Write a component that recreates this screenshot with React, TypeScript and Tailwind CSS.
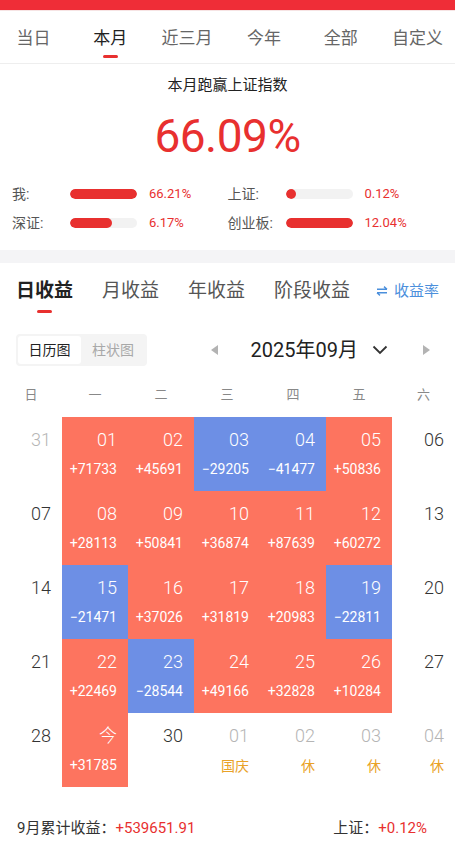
import React from 'react';

const RED = '#e8302f';
const CELL_RED = 'bg-[#fd745f]';
const CELL_BLUE = 'bg-[#6d8fe5]';

type Cell = {
  day: string;
  value?: string;
  kind: 'up' | 'down' | 'off' | 'prev' | 'next';
  note?: string;
};

const weeks: Cell[][] = [
  [
    { day: '31', kind: 'prev' },
    { day: '01', value: '+71733', kind: 'up' },
    { day: '02', value: '+45691', kind: 'up' },
    { day: '03', value: '−29205', kind: 'down' },
    { day: '04', value: '−41477', kind: 'down' },
    { day: '05', value: '+50836', kind: 'up' },
    { day: '06', kind: 'off' },
  ],
  [
    { day: '07', kind: 'off' },
    { day: '08', value: '+28113', kind: 'up' },
    { day: '09', value: '+50841', kind: 'up' },
    { day: '10', value: '+36874', kind: 'up' },
    { day: '11', value: '+87639', kind: 'up' },
    { day: '12', value: '+60272', kind: 'up' },
    { day: '13', kind: 'off' },
  ],
  [
    { day: '14', kind: 'off' },
    { day: '15', value: '−21471', kind: 'down' },
    { day: '16', value: '+37026', kind: 'up' },
    { day: '17', value: '+31819', kind: 'up' },
    { day: '18', value: '+20983', kind: 'up' },
    { day: '19', value: '−22811', kind: 'down' },
    { day: '20', kind: 'off' },
  ],
  [
    { day: '21', kind: 'off' },
    { day: '22', value: '+22469', kind: 'up' },
    { day: '23', value: '−28544', kind: 'down' },
    { day: '24', value: '+49166', kind: 'up' },
    { day: '25', value: '+32828', kind: 'up' },
    { day: '26', value: '+10284', kind: 'up' },
    { day: '27', kind: 'off' },
  ],
  [
    { day: '28', kind: 'off' },
    { day: '今', value: '+31785', kind: 'up' },
    { day: '30', kind: 'off' },
    { day: '01', kind: 'next', note: '国庆' },
    { day: '02', kind: 'next', note: '休' },
    { day: '03', kind: 'next', note: '休' },
    { day: '04', kind: 'next', note: '休' },
  ],
];

const compare = [
  { label: '我:', pct: 100, value: '66.21%' },
  { label: '上证:', pct: 16, value: '0.12%' },
  { label: '深证:', pct: 62, value: '6.17%' },
  { label: '创业板:', pct: 100, value: '12.04%' },
];

const gridCols = 'grid grid-cols-[62px_repeat(5,66px)_1fr]';

function DayCell({ cell }: { cell: Cell }) {
  const bg = cell.kind === 'up' ? CELL_RED : cell.kind === 'down' ? CELL_BLUE : 'bg-white';
  const dayColor =
    cell.kind === 'up' || cell.kind === 'down'
      ? 'text-white'
      : cell.kind === 'off'
        ? 'text-[#333333]'
        : 'text-[#b5b5b5]';
  return (
    <div className={`${bg} h-[74px] flex flex-col items-end pr-[11px] pt-[11px]`}>
      <span className={`${dayColor} text-[18px] leading-[24px] font-light`}>{cell.day}</span>
      {cell.value && (
        <span className="text-white text-[14px] leading-[18px] mt-[8px]">{cell.value}</span>
      )}
      {cell.note && (
        <span className="text-[#e9a227] text-[14px] leading-[18px] mt-[9px]">{cell.note}</span>
      )}
    </div>
  );
}

export default function App() {
  return (
    <div className="w-[455px] h-[847px] bg-white overflow-hidden font-['Roboto','Noto_Sans_CJK_SC',sans-serif] text-[#222]">
      {/* top red strip */}
      <div className="h-[10px] bg-[#ef2d37]" />
      <div className="h-px bg-[#f6e4e4]" />

      {/* period tabs */}
      <div className="h-[53px] border-b border-[#eeeeee] overflow-hidden">
        <div className="grid grid-cols-6 w-[461px] -ml-[5px] h-full">
          {['当日', '本月', '近三月', '今年', '全部', '自定义'].map((t) => (
            <div key={t} className="flex flex-col items-center pt-[16px]">
              <span className={`text-[17px] leading-[22px] ${t === '本月' ? 'text-[#222]' : 'text-[#666]'}`}>{t}</span>
              {t === '本月' && <span className="mt-[6px] w-[15px] h-[3px] rounded-full bg-[#e8302f]" />}
            </div>
          ))}
        </div>
      </div>

      {/* summary */}
      <div className="h-[186px] flex flex-col items-center">
        <div className="mt-[11px] text-[15px] leading-[20px] text-[#222]">本月跑赢上证指数</div>
        <div className="mt-[13px] text-[46px] leading-[56px] tracking-[-0.5px]" style={{ color: RED }}>66.09%</div>
        <div className="w-full grid grid-cols-2 px-[12px] mt-[21px] gap-y-[11px]">
          {compare.map((c) => (
            <div key={c.label} className="flex items-center h-[18px]">
              <span className="w-[58px] text-[14px] text-[#555]">{c.label}</span>
              <div className="w-[67px] h-[10px] rounded-full bg-[#f2f2f2] overflow-hidden">
                <div className="h-full rounded-full bg-[#e8302f]" style={{ width: `${c.pct}%` }} />
              </div>
              <span className="ml-[12px] text-[13px]" style={{ color: RED }}>{c.value}</span>
            </div>
          ))}
        </div>
      </div>

      <div className="h-[13px] bg-[#f4f4f6]" />

      {/* profit tabs */}
      <div className="h-[64px] flex items-start pl-[16px] pr-[16px] pt-[16px]">
        <div className="flex gap-[29px]">
          {['日收益', '月收益', '年收益', '阶段收益'].map((t, i) => (
            <div key={t} className="flex flex-col items-center">
              <span className={`text-[19px] leading-[24px] ${i === 0 ? 'font-bold text-[#222]' : 'text-[#555]'}`}>{t}</span>
              {i === 0 && <span className="mt-[7px] w-[15px] h-[3px] rounded-full bg-[#e8302f]" />}
            </div>
          ))}
        </div>
        <div className="ml-auto flex items-center gap-[6px] text-[#4b8fdc] pt-[2px]">
          <svg width="12" height="10" viewBox="0 0 12 10" fill="none" stroke="#4b8fdc" strokeWidth="1.4">
            <path d="M1 3.2h10M8 0.6l3 2.6" />
            <path d="M11 6.8H1M4 9.4L1 6.8" />
          </svg>
          <span className="text-[15px] leading-[20px]">收益率</span>
        </div>
      </div>

      {/* switch + month */}
      <div className="h-[45px] flex items-start px-[16px] pt-[7px]">
        <div className="flex bg-[#f4f4f4] rounded-[4px] p-[2px] h-[32px]">
          <div className="w-[63px] bg-white rounded-[3px] flex items-center justify-center text-[14px] text-[#222]">日历图</div>
          <div className="w-[64px] flex items-center justify-center text-[14px] text-[#a8a8a8]">柱状图</div>
        </div>
        <div className="ml-auto flex items-center h-[32px]">
          <svg width="8" height="10" viewBox="0 0 8 10" className="mr-[32px]"><path d="M7 0v10L0 5z" fill="#b3b3b3" /></svg>
          <span className="text-[20px] leading-[26px] text-[#222]">2025年09月</span>
          <svg width="16" height="10" viewBox="0 0 16 10" fill="none" stroke="#333" strokeWidth="1.8" className="ml-[14px]">
            <path d="M1.5 1.5l6.5 6.5 6.5-6.5" />
          </svg>
          <svg width="8" height="10" viewBox="0 0 8 10" className="ml-[34px] mr-[9px]"><path d="M1 0v10l7-5z" fill="#b3b3b3" /></svg>
        </div>
      </div>

      {/* weekdays */}
      <div className={`${gridCols} h-[45px] items-center`}>
        {['日', '一', '二', '三', '四', '五', '六'].map((d) => (
          <span key={d} className="text-center text-[13px] text-[#888]">{d}</span>
        ))}
      </div>

      {/* calendar */}
      <div className="flex flex-col">
        {weeks.map((w, wi) => (
          <div key={wi} className={gridCols}>
            {w.map((c, ci) => (
              <DayCell key={ci} cell={c} />
            ))}
          </div>
        ))}
      </div>

      {/* footer */}
      <div className="flex items-center px-[17px] mt-[31px] text-[15px] leading-[20px]">
        <span className="text-[#333]">9月累计收益：</span>
        <span style={{ color: RED }}>+539651.91</span>
        <span className="ml-auto text-[#333]">上证：</span>
        <span className="mr-[11px]" style={{ color: RED }}>+0.12%</span>
      </div>
    </div>
  );
}
